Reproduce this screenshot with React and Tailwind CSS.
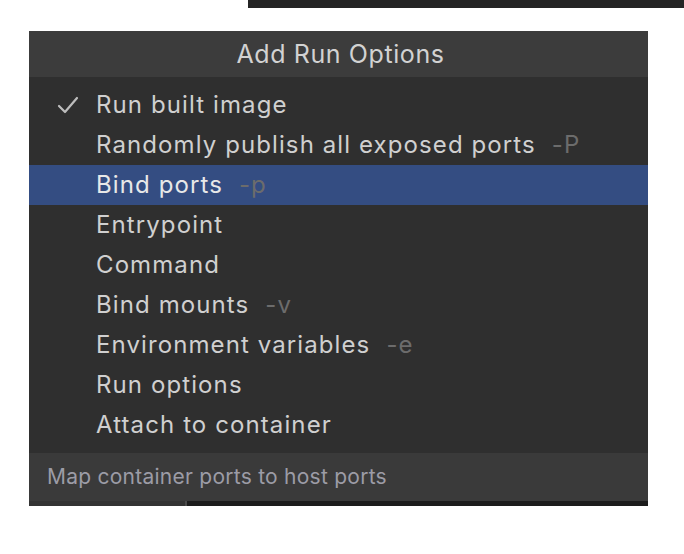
const ITEMS = [
  { label: 'Run built image', checked: true },
  { label: 'Randomly publish all exposed ports', hint: '-P' },
  { label: 'Bind ports', hint: '-p', active: true },
  { label: 'Entrypoint' },
  { label: 'Command' },
  { label: 'Bind mounts', hint: '-v' },
  { label: 'Environment variables', hint: '-e' },
  { label: 'Run options' },
  { label: 'Attach to container' },
];

function Check() {
  return (
    <svg width="22" height="18" viewBox="0 0 22 18" fill="none">
      <path d="M2 10 L8 16 L20 2" stroke="#bdbdbd" strokeWidth="2.2" strokeLinecap="round" strokeLinejoin="round" />
    </svg>
  );
}

export default function App() {
  return (
    <div className="relative h-[554px] w-[684px] overflow-hidden bg-white" style={{ fontFamily: 'Inter, "Noto Sans", sans-serif' }}>
      {/* window behind */}
      <div className="absolute left-[248px] top-0 h-[8px] w-[436px] bg-[#252525]" />

      <div className="absolute left-[29px] top-[31px] w-[619px]">
        {/* Header */}
        <div className="flex h-[46px] items-center justify-center bg-[#3c3c3c] pl-[4px] pt-[1px] text-[25px] tracking-[0.6px] text-[#d2d2d2]">
          Add Run Options
        </div>

        {/* Items */}
        <div className="flex flex-col bg-[#2f2f2f] pb-[8px] pt-[8px]">
          {ITEMS.map((it) => (
            <div
              key={it.label}
              className={`flex h-[40px] items-center text-[24px] tracking-[1.1px] ${it.active ? 'bg-[#344d82] text-[#e8e8e8]' : 'text-[#d0d0d0]'}`}
            >
              <div className="flex w-[67px] justify-end pr-[17px]">{it.checked && <Check />}</div>
              <span>{it.label}</span>
              {it.hint && <span className="ml-[16px] text-[#6c6c6c]">{it.hint}</span>}
            </div>
          ))}
        </div>

        {/* Footer */}
        <div className="flex h-[48px] items-center bg-[#3a3a3a] px-[18px] text-[21px] tracking-[0.25px] text-[#9c9ca6]">
          Map container ports to host ports
        </div>

        <div className="flex h-[5px]">
          <div className="w-[156px] bg-[#333333]" />
          <div className="w-[2px] bg-[#4a4a4a]" />
          <div className="flex-1 bg-[#1c1c1c]" />
        </div>
      </div>
    </div>
  );
}
